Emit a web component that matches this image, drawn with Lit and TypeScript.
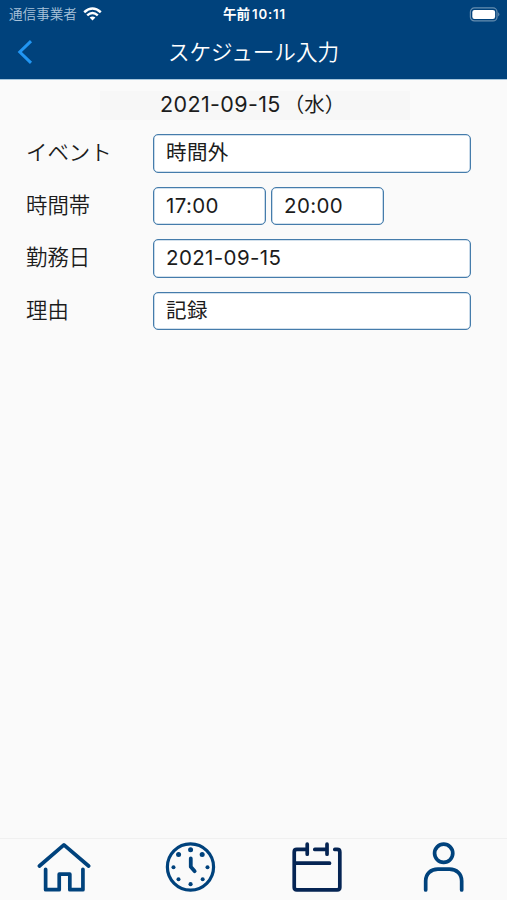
import { LitElement, html, svg, css } from "lit";
import { customElement } from "lit/decorators.js";

const home = svg`<svg viewBox="35.375 839 56 56">
  <path d="M39.8 866 64.3 844.8 89 866"/>
  <path d="M46 869.3V889.7H59.6V874.2H70.2V889.7H83.3V869.3"/></svg>`;

const clock = svg`<svg viewBox="162.125 839 56 56">
  <circle cx="190.6" cy="867" r="23.1" stroke-width="3.2"/>
  <path d="M190.9 858.5V866.8L194.8 871.2" stroke-width="3.8"/>
  <g class="dots"><circle cx="190.7" cy="849.8" r="2.5"/><circle cx="202.3" cy="854.6" r="2.5"/>
  <circle cx="178.7" cy="854.6" r="2.5"/><circle cx="207.6" cy="867.2" r="2"/>
  <circle cx="173.6" cy="867.2" r="2"/><circle cx="202.8" cy="879.2" r="2"/>
  <circle cx="178.6" cy="879.2" r="2"/><circle cx="190.7" cy="884.2" r="2.1"/></g></svg>`;

const calendar = svg`<svg viewBox="289.175 839 56 56">
  <path d="M305.8 849.4H297Q294.4 849.4 294.4 852V887.2Q294.4 889.8 297 889.8H337.4Q340 889.8 340 887.2V852Q340 849.4 337.4 849.4H335"/>
  <path d="M307.4 844.2V854.2M327.2 844.2V854.2M315 849.4H326M295 863.2H329.7"/></svg>`;

const person = svg`<svg viewBox="416.125 839 56 56">
  <circle cx="443.8" cy="853.3" r="9.1"/>
  <path d="M425.8 890V881C425.8 873.5 431 869.2 438 869.2H449.6C456.6 869.2 461.8 873.5 461.8 881V890"/></svg>`;

@customElement("app-root")
export class AppRoot extends LitElement {
  static styles = css`
    :host { display: flex; flex-direction: column; width: 507px; height: 900px; overflow: hidden;
      box-sizing: border-box; background: #fafafa; color: #1c1c1c;
      font-family: Inter, "Noto Sans CJK JP", sans-serif; }
    * { box-sizing: border-box; }
    header { height: 80px; flex: none; background: #00427c; border-bottom: 1px solid #a6c6dd; color: #fff; }
    .status { height: 27px; display: grid; grid-template-columns: 1fr auto 1fr; align-items: center; padding: 0 7px 0 9px; }
    .carrier { display: flex; align-items: center; gap: 6px; font-size: 13.6px; font-weight: 350; color: #a9c3da; line-height: 28px; }
    .wifi { width: 19px; height: 14px; fill: none; stroke: #fff; display: block; }
    .time { display: flex; gap: 2px; font-size: 13.2px; font-weight: 600; line-height: 28px; letter-spacing: .9px; white-space: nowrap; }
    .time span { font-size: 13.5px; letter-spacing: 0; }
    .battery { justify-self: end; width: 31px; height: 15px; display: block; }
    .nav { height: 50px; display: grid; grid-template-columns: 1fr auto 1fr; align-items: center; }
    .back { width: 16px; height: 24px; margin-left: 17px; fill: none; stroke: #2196f3; stroke-width: 3; }
    .title { font-size: 21.6px; font-weight: 350; line-height: 50px; }
    .date { flex: none; width: 310px; height: 29px; margin: 11px 0 0 100px; padding-left: 60px; background: #f7f7f7;
      font-size: 21.5px; font-weight: 400; letter-spacing: .38px; line-height: 27px; white-space: nowrap; }
    .weekday { margin-left: 3px; font-size: 20.5px; letter-spacing: 0; }
    .form { padding: 14px 36px 0 26px; display: flex; flex-direction: column; gap: 14.1px; }
    .row { display: grid; grid-template-columns: 127px 317.5px; height: 38.5px; }
    .label { font-size: 21.4px; line-height: 37px; font-weight: 350; }
    .fields { display: flex; gap: 5.5px; }
    .field { flex: 1; height: 38.5px; border: 1px solid #457cab; border-radius: 5px; background: #fff;
      box-shadow: inset 0 0 0 .6px #a5c2da;
      padding-left: 12px; font-size: 20.5px; letter-spacing: .38px; line-height: 35px; font-weight: 400; }
    .short { flex: 0 0 112.5px; }
    .tabs { margin-top: auto; flex: none; height: 62px; display: grid; grid-template-columns: repeat(4, 1fr);
      justify-items: center; border-top: 1px solid #f0f0f0; background: #fafafa; }
    .tabs svg { width: 56px; height: 56px; display: block; fill: none; stroke: #00427c; stroke-width: 3.7;
      stroke-linecap: round; stroke-linejoin: round; }
    .tabs .active svg { stroke: #052453; }
    .tabs .dots { fill: #00427c; stroke: none; }
  `;

  private row(label: string, values: string[]) {
    return html`<div class="row"><div class="label">${label}</div><div class="fields">
      ${values.map(v => html`<div class="field ${values.length > 1 ? "short" : ""}">${v}</div>`)}</div></div>`;
  }

  render() {
    return html`
      <header>
        <div class="status">
          <div class="carrier"><span>通信事業者</span>
            <svg class="wifi" viewBox="0 0 19 14"><path d="M1.2 5.2Q9.5-2.2 17.8 5.2M4.2 8.4Q9.5 3.7 14.8 8.4" stroke-width="2.5"/>
              <path d="M6.6 10.6Q9.5 8.2 12.4 10.6L9.5 13.5Z" fill="#fff" stroke="none"/></svg></div>
          <div class="time"><span>午前</span>10:11</div>
          <svg class="battery" viewBox="0 0 31 15"><rect x="1.4" y=".9" width="26.6" height="13" rx="4" fill="#00427c" stroke="#668eb0" stroke-width="1.2"/>
            <rect x="3.3" y="2.9" width="22.8" height="9" rx="2.2" fill="#fff"/><path d="M29.2 5.3Q31.6 7.4 29.2 9.5Z" fill="#668eb0"/></svg>
        </div>
        <div class="nav">
          <svg class="back" viewBox="0 0 16 24"><path d="M14 1.2 2.8 12 14 22.8"/></svg>
          <div class="title">スケジュール入力</div>
        </div>
      </header>
      <div class="date">2021-09-15<span class="weekday">（水）</span></div>
      <div class="form">
        ${this.row("イベント", ["時間外"])}
        ${this.row("時間帯", ["17:00", "20:00"])}
        ${this.row("勤務日", ["2021-09-15"])}
        ${this.row("理由", ["記録"])}
      </div>
      <nav class="tabs"><div>${home}</div><div>${clock}</div><div class="active">${calendar}</div><div>${person}</div></nav>`;
  }
}
